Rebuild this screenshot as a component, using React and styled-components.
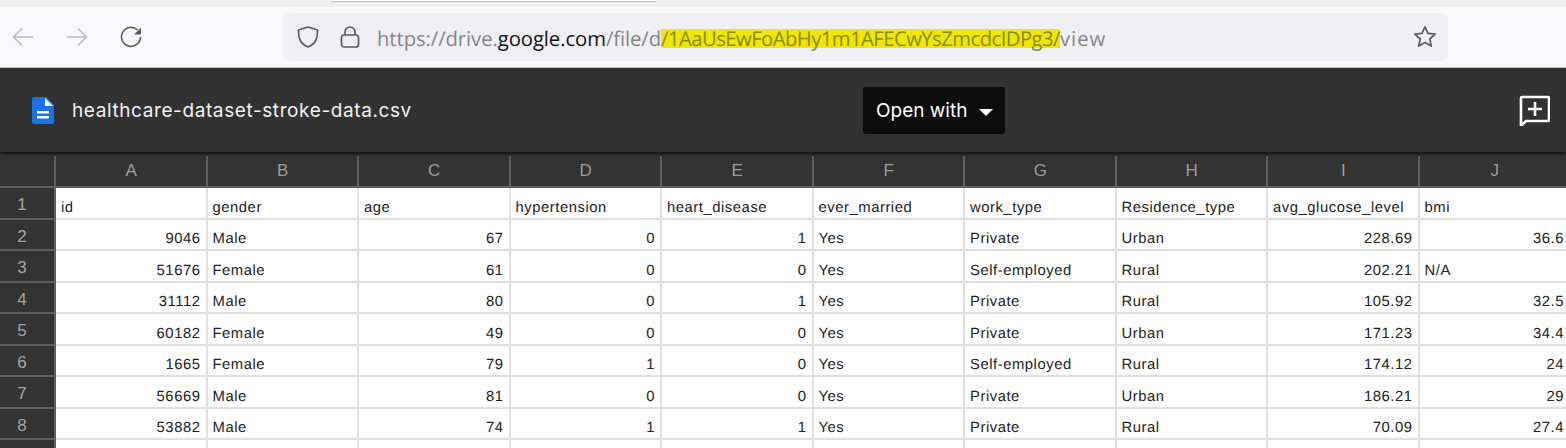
import React from "react";
import styled, { createGlobalStyle } from "styled-components";

const Global = createGlobalStyle`
  html, body { margin: 0; padding: 0; height: 448px; overflow: hidden; background: #fff; }
  #root { height: 448px; overflow: hidden; }
`;
const Page = styled.div`width: 1566px; height: 448px; overflow: hidden; display: flex; flex-direction: column;`;
const TabStrip = styled.div`height: 7px; background: #f0f0f0; flex: none; padding-left: 331px; box-sizing: border-box;`;
const ActiveTab = styled.div`width: 325px; height: 1px; background: #fff; box-shadow: 0 1px 1px #b5b5b5;`;
const Toolbar = styled.div`
  height: 60px; flex: none; background: #f9f9fb; border-bottom: 1px solid #c4c4c8;
  display: flex; align-items: center; padding: 0 0 0 11px;
`;
const NavIcon = styled.svg`width: 24px; height: 24px; flex: none; margin-right: ${p => p.$gap}px; fill: none; stroke: ${p => p.$c}; stroke-width: 1.6;`;
const UrlBar = styled.div`
  width: 1165px; height: 48px; background: #f0f0f4; border-radius: 8px;
  display: flex; align-items: center; padding: 0 11px 0 13px; box-sizing: border-box;
`;
const BarIcon = styled.svg`width: 24px; height: 24px; flex: none; fill: none; stroke: #5b5b66; stroke-width: 1.7; margin-right: ${p => p.$gap || 0}px;`;
const Url = styled.div`
  flex: 1; font: 20.3px "Open Sans", sans-serif; color: #85858f; white-space: nowrap; letter-spacing: -.08px;
  padding-top: 1px; text-rendering: geometricPrecision;
`;
const Dom = styled.span`color: #15141a;`;
const Mark = styled.span`display: inline-block; line-height: 19px; background: #f0e600; color: #8c8c0c; letter-spacing: -.56px;`;
const Tail = styled.span`letter-spacing: 1px;`;
const Header = styled.div`
  height: 84px; flex: none; background: #323232; display: flex; align-items: center;
  padding: 0 16px 0 32px; position: relative; box-sizing: border-box;
  box-shadow: 0 2px 3px rgba(0,0,0,.6); z-index: 1;
`;
const FileName = styled.div`font: 400 19px Inter, sans-serif; color: #f1f1f1; margin-left: 18px; flex: 0 0 791px; white-space: nowrap; letter-spacing: .6px;`;
const OpenWith = styled.div`
  width: 142px; height: 47px; background: #0c0c0c; border-radius: 3px; display: flex; align-items: center;
  padding-left: 13px; box-sizing: border-box; color: #fff; font: 400 19px Inter, sans-serif;
`;
const Caret = styled.span`width: 0; height: 0; border: 7px solid transparent; border-top-color: #fff; border-bottom: 0; margin-left: 12px; margin-top: 5px;`;
const Spacer = styled.div`flex: 1;`;
const Sheet = styled.div`
  display: grid; grid-template-columns: 56px repeat(10, 151.5px); grid-auto-rows: auto;
  width: 1566px; overflow: hidden; flex: none; padding-top: 4px; background: #333;
`;
const ColHead = styled.div`
  height: 32px; background: #333; color: #9c9c9c; font: 17px "Liberation Sans", sans-serif;
  display: flex; align-items: center; justify-content: center; box-sizing: border-box; padding-left: 1px;
  border-right: 2px solid #5f5f5f; border-bottom: 2px solid #5f5f5f;
  &:last-child { border-right: 0; }
`;
const RowHead = styled.div`
  height: ${p => p.$h}px; background: #333; color: #a4a4a4; font: 17px "Liberation Sans", sans-serif; box-sizing: border-box;
  display: flex; align-items: center; justify-content: center; padding: 4px 10px 0 0;
  border-right: 2px solid #5f5f5f; border-bottom: 2px solid #5f5f5f;
`;
const Cell = styled.div`
  height: ${p => p.$h}px; background: #fff; color: #222; font: 14.8px "Liberation Sans", sans-serif; letter-spacing: .55px;
  text-rendering: geometricPrecision;
  box-sizing: border-box; border-right: 2px solid #e0e0e0; border-bottom: 2px solid #e0e0e0;
  display: flex; align-items: flex-end; padding: 0 5px 2px 5px; white-space: nowrap; overflow: hidden;
  justify-content: ${p => (p.$num ? "flex-end" : "flex-start")};
`;

const cols = "ABCDEFGHIJ".split("");
const rows = [
  ["id","gender","age","hypertension","heart_disease","ever_married","work_type","Residence_type","avg_glucose_level","bmi"],
  ["9046","Male","67","0","1","Yes","Private","Urban","228.69","36.6"],
  ["51676","Female","61","0","0","Yes","Self-employed","Rural","202.21","N/A"],
  ["31112","Male","80","0","1","Yes","Private","Rural","105.92","32.5"],
  ["60182","Female","49","0","0","Yes","Private","Urban","171.23","34.4"],
  ["1665","Female","79","1","0","Yes","Self-employed","Rural","174.12","24"],
  ["56669","Male","81","0","0","Yes","Private","Urban","186.21","29"],
  ["53882","Male","74","1","1","Yes","Private","Rural","70.09","27.4"],
  ["","","","","","","","","",""],
];
const heights = [32, 31, 32, 31, 32, 31, 32, 31, 31];
const isNum = v => /^[\d.]+$/.test(v);

export default function App() {
  return (
    <Page>
      <Global />
      <TabStrip><ActiveTab /></TabStrip>
      <Toolbar>
        <NavIcon $c="#bcbcc2" $gap={30} viewBox="0 0 24 24"><path d="M22 12H2.500M11 3.500 2.500 12l8.500 8.500" /></NavIcon>
        <NavIcon $c="#bcbcc2" $gap={31} viewBox="0 0 24 24"><path d="M2 12h19.500M13 3.500l8.500 8.500-8.500 8.500" /></NavIcon>
        <NavIcon $c="#5b5b66" $gap={139} viewBox="0 0 24 24"><path d="M20.500 12a9.500 9.500 0 1 1-3-7" /><path d="M21 2.500v7h-7z" fill="#5b5b66" stroke="none" /></NavIcon>
        <UrlBar>
          <BarIcon $gap={18} viewBox="0 0 24 24"><path d="M12 2 2.500 5c0 9 2 14 9.500 17 7.500-3 9.500-8 9.500-17z" strokeLinejoin="round" /></BarIcon>
          <BarIcon $gap={15} viewBox="0 0 24 24"><rect x="3.500" y="10" width="17" height="12" rx="2.500" /><path d="M7 10V7a5 5 0 0 1 10 0v3" /></BarIcon>
          <Url>https://drive.<Dom>google.com</Dom>/file/d<Mark>/1AaUsEwFoAbHy1m1AFECwYsZmcdcIDPg3/</Mark><Tail>view</Tail></Url>
          <BarIcon viewBox="0 0 24 24"><path d="m12 1.800 3 6.600 7.200.8-5.400 4.800 1.500 7.100L12 17.500l-6.300 3.600 1.500-7.100L1.800 9.200 9 8.400z" strokeLinejoin="round" /></BarIcon>
        </UrlBar>
      </Toolbar>
      <Header>
        <svg width="22" height="27" viewBox="0 0 22 27"><path d="M2 0h12l8 8v17a2 2 0 0 1-2 2H2a2 2 0 0 1-2-2V2a2 2 0 0 1 2-2z" fill="#1a73e8" /><path d="M13 1l8 8h-8z" fill="#fff" /><path d="M5 14h12v2.500H5zM5 19h12v2.500H5z" fill="#fff" /></svg>
        <FileName>healthcare-dataset-stroke-data.csv</FileName>
        <OpenWith>Open with<Caret /></OpenWith>
        <Spacer />
        <svg width="31" height="31" viewBox="0 0 31 31"><path d="M3 2h26a1 1 0 0 1 1 1v22a1 1 0 0 1-1 1H7l-5 5V3a1 1 0 0 1 1-1z" fill="none" stroke="#fff" strokeWidth="2.600" /><path d="M16 7v14M9 14h14" stroke="#fff" strokeWidth="2.600" fill="none" /></svg>
      </Header>
      <Sheet>
        <ColHead />
        {cols.map(c => <ColHead key={c}>{c}</ColHead>)}
        {rows.map((r, i) => (
          <React.Fragment key={i}>
            <RowHead $h={heights[i]}>{i + 1}</RowHead>
            {r.map((v, j) => <Cell key={j} $h={heights[i]} $num={isNum(v)}>{v}</Cell>)}
          </React.Fragment>
        ))}
      </Sheet>
    </Page>
  );
}
